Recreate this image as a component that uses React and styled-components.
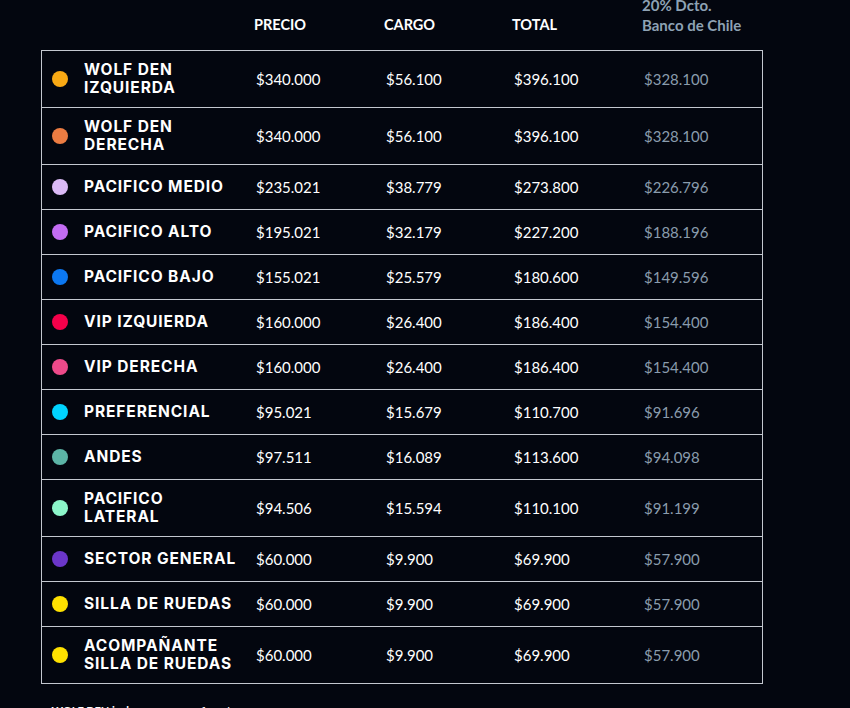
import React from "react";
import styled, { createGlobalStyle } from "styled-components";

const GlobalStyle = createGlobalStyle`
  html, body {
    margin: 0;
    padding: 0;
    background: #03060f;
    overflow: hidden;
  }
`;

const COLS = "213px 130px 128px 130px 1fr";

const PageWrapper = styled.section`
  width: 722px;
  margin-left: 41px;
  margin-top: -5px;
  font-family: Lato, "Liberation Sans", sans-serif;
  color: #ffffff;
`;

const HeaderRow = styled.div`
  display: grid;
  grid-template-columns: ${COLS};
  align-items: end;
  padding-bottom: 15px;
`;

const HeadCell = styled.div`
  font-weight: 700;
  line-height: 20px;
  color: ${(p) => (p.$muted ? "#8ea2b4" : "#ffffff")};
  font-size: ${(p) => (p.$muted ? "15px" : "14.5px")};
`;

const TableBox = styled.div`
  border: 1px solid #c3c7cf;
`;

const Row = styled.div`
  display: grid;
  grid-template-columns: 212px 130px 128px 130px 1fr;
  align-items: center;
  min-height: 24px;
  padding: 10px 0;
  border-top: 1px solid #c3c7cf;

  &:first-child {
    border-top: none;
  }
`;

const NameCell = styled.div`
  display: flex;
  align-items: center;
  gap: 16px;
  padding-left: 10px;
`;

const Dot = styled.span`
  flex: none;
  width: 16px;
  height: 16px;
  border-radius: 50%;
  background: ${(p) => p.$color};
`;

const Name = styled.span`
  font-family: Inter, "Noto Sans", sans-serif;
  font-weight: 700;
  font-size: 15.5px;
  line-height: 18px;
  letter-spacing: 0.9px;
  color: #ffffff;
`;

const Cell = styled.div`
  padding-left: 2px;
  font-size: 15px;
  line-height: 18px;
  color: ${(p) => (p.$muted ? "#8a9cad" : "#ffffff")};
`;

const Footnote = styled.p`
  margin: 20px 0 0 -3px;
  font-family: Lato, "Liberation Sans", sans-serif;
  font-size: 11px;
  font-weight: 700;
  color: #ffffff;
`;

const rows = [
  { color: "#f9a914", name: ["WOLF DEN", "IZQUIERDA"], precio: "$340.000", cargo: "$56.100", total: "$396.100", dcto: "$328.100" },
  { color: "#ec7c42", name: ["WOLF DEN", "DERECHA"], precio: "$340.000", cargo: "$56.100", total: "$396.100", dcto: "$328.100" },
  { color: "#dbbaf6", name: ["PACIFICO MEDIO"], precio: "$235.021", cargo: "$38.779", total: "$273.800", dcto: "$226.796" },
  { color: "#c36cf3", name: ["PACIFICO ALTO"], precio: "$195.021", cargo: "$32.179", total: "$227.200", dcto: "$188.196" },
  { color: "#0c78f2", name: ["PACIFICO BAJO"], precio: "$155.021", cargo: "$25.579", total: "$180.600", dcto: "$149.596" },
  { color: "#f5004a", name: ["VIP IZQUIERDA"], precio: "$160.000", cargo: "$26.400", total: "$186.400", dcto: "$154.400" },
  { color: "#ee4a8a", name: ["VIP DERECHA"], precio: "$160.000", cargo: "$26.400", total: "$186.400", dcto: "$154.400" },
  { color: "#00d3ff", name: ["PREFERENCIAL"], precio: "$95.021", cargo: "$15.679", total: "$110.700", dcto: "$91.696" },
  { color: "#5cb4a6", name: ["ANDES"], precio: "$97.511", cargo: "$16.089", total: "$113.600", dcto: "$94.098" },
  { color: "#8cf6ca", name: ["PACIFICO", "LATERAL"], precio: "$94.506", cargo: "$15.594", total: "$110.100", dcto: "$91.199" },
  { color: "#6b36c9", name: ["SECTOR GENERAL"], precio: "$60.000", cargo: "$9.900", total: "$69.900", dcto: "$57.900" },
  { color: "#ffe100", name: ["SILLA DE RUEDAS"], precio: "$60.000", cargo: "$9.900", total: "$69.900", dcto: "$57.900" },
  { color: "#ffe100", name: ["ACOMPAÑANTE", "SILLA DE RUEDAS"], precio: "$60.000", cargo: "$9.900", total: "$69.900", dcto: "$57.900" },
];

const App = () => {
  return (
    <>
      <GlobalStyle />
      <PageWrapper>
        <HeaderRow>
          <div />
          <HeadCell>PRECIO</HeadCell>
          <HeadCell>CARGO</HeadCell>
          <HeadCell>TOTAL</HeadCell>
          <HeadCell $muted>
            20% Dcto.
            <br />
            Banco de Chile
          </HeadCell>
        </HeaderRow>
        <TableBox>
          {rows.map((r, i) => (
            <Row key={i}>
              <NameCell>
                <Dot $color={r.color} />
                <Name>
                  {r.name.map((line, j) => (
                    <React.Fragment key={j}>
                      {j > 0 && <br />}
                      {line}
                    </React.Fragment>
                  ))}
                </Name>
              </NameCell>
              <Cell>{r.precio}</Cell>
              <Cell>{r.cargo}</Cell>
              <Cell>{r.total}</Cell>
              <Cell $muted>{r.dcto}</Cell>
            </Row>
          ))}
        </TableBox>
        <Footnote>▲ WOLF DEN incluye acceso preferente.</Footnote>
      </PageWrapper>
    </>
  );
};

export default App;
